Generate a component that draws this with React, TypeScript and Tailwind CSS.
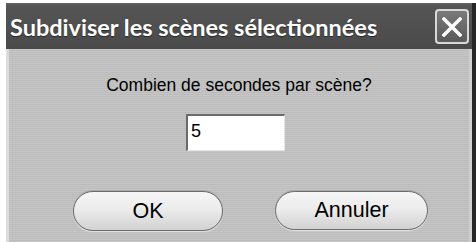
import React from "react";

export default function App() {
  return (
    <div className="w-[476px] h-[242px] bg-white pl-[6px] pt-[3px] flex overflow-hidden">
      <div className="flex-1 flex flex-col border-r-[4px] border-[#262626]">
        <div className="h-[46px] flex items-center justify-between pl-[4px] pr-[3px] bg-[linear-gradient(to_bottom,#6a6a6a_0px,#555555_2px,#4a4a4a_100%)]">
          <span
            className="text-white font-bold text-[23.5px] leading-none pt-[3px] [text-shadow:0_1px_1px_rgba(0,0,0,0.5)]"
            style={{ fontFamily: "Lato, 'Open Sans', sans-serif" }}
          >
            Subdiviser les scènes sélectionnées
          </span>
          <div className="w-[34px] h-[35px] rounded-[4px] border-[2px] border-[#d8d8d8] bg-[linear-gradient(to_bottom,#7a7a7a,#5a5a5a)] flex items-center justify-center mt-[1px]">
            <svg width="20" height="20" viewBox="0 0 20 20">
              <path d="M2 2 L18 18 M18 2 L2 18" stroke="#ffffff" strokeWidth="3.4" strokeLinecap="square" />
            </svg>
          </div>
        </div>
        <div
          className="flex-1 flex flex-col border-l-[3px] border-r-[3px] border-l-[#dcdcdc] border-r-[#cfcfcf] bg-[repeating-linear-gradient(to_bottom,#c5c5c5_0px,#c5c5c5_1px,#bcbcbc_1px,#bcbcbc_2px)]"
          style={{ fontFamily: "'Liberation Sans', Arial, sans-serif" }}
        >
          <div className="flex flex-col items-center pt-[27px]">
            <div className="text-[17.5px] leading-[18px] text-black">Combien de secondes par scène?</div>
            <div className="mt-[20px] mr-[7px] w-[99px] h-[37px] bg-white border-t-[2px] border-l-[2px] border-t-[#6a6a6a] border-l-[#6a6a6a] border-b border-r border-b-[#e6e6e6] border-r-[#e6e6e6] flex items-center pl-[3px] pb-[3px] text-[18px] text-black">
              5
            </div>
          </div>
          <div className="flex pl-[64px] gap-[52px] mt-[40px]">
            <div className="w-[150px] h-[40px] rounded-full border-[1.5px] border-[#6c6c6c] bg-[linear-gradient(to_bottom,#f6f6f6_0%,#ececec_45%,#d2d2d2_100%)] shadow-[0_1px_1px_#e4e4e4,0_-1px_0_#a8a8a8] flex items-center justify-center text-[21.5px] text-black">
              OK
            </div>
            <div className="w-[153px] h-[39px] rounded-full border-[1.5px] border-[#6c6c6c] bg-[linear-gradient(to_bottom,#f6f6f6_0%,#ececec_45%,#d2d2d2_100%)] shadow-[0_1px_1px_#e4e4e4,0_-1px_0_#a8a8a8] flex items-center justify-center text-[21.5px] text-black">
              Annuler
            </div>
          </div>
        </div>
      </div>
    </div>
  );
}
